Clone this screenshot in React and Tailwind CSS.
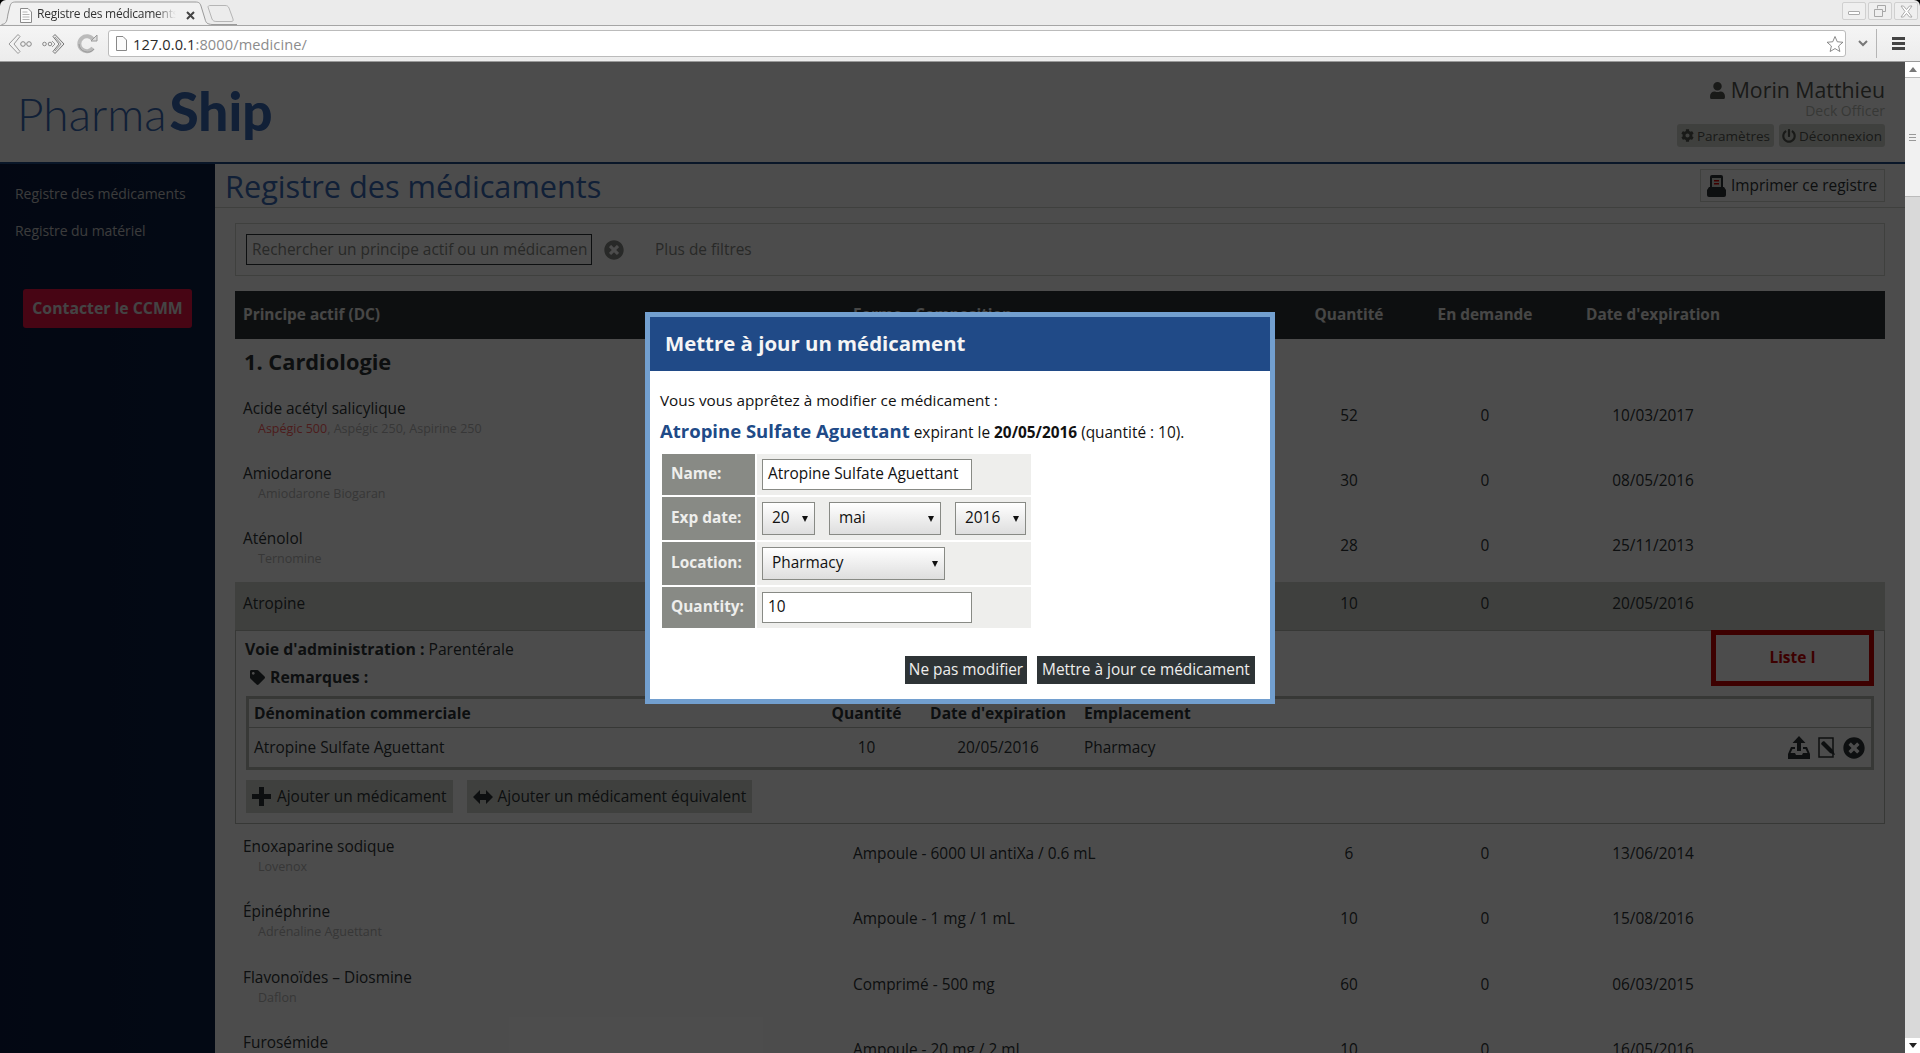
import React from "react";
import { FaCog, FaPowerOff, FaTag, FaTimesCircle, FaUser } from "react-icons/fa";

const F = { fontFamily: '"Open Sans","Noto Sans",sans-serif' };
const COLS = "grid grid-cols-[618px_437px_118px_154px_182px_1fr]";
const SUB = "grid grid-cols-[569px_97px_166px_1fr]";

function Row({ name, sub, red, forme, q, d, date, h = "h-[65px]" }) {
  return (
    <div className={`${COLS} ${h} text-[15.4px] leading-6 text-[#2e3436]`}>
      <div className="pl-[8px] pt-[10px]">
        <div>{name}</div>
        <div className="pl-[15px] text-[12.5px] leading-4 text-[#b8b8b8]">
          {red && <span className="text-[#ff6060]">{red}</span>}
          {red && ", "}
          {sub}
        </div>
      </div>
      <div className="pt-[17px]">{forme}</div>
      <div className="pt-[17px] text-center">{q}</div>
      <div className="pt-[17px] text-center">{d}</div>
      <div className="pt-[17px] text-center">{date}</div>
    </div>
  );
}

function Tab() {
  return (
    <div className="relative w-[236px] h-[25px] shrink-0 text-[#333]">
      <svg className="absolute left-0 top-0" width="236" height="25" viewBox="0 0 236 25">
        <path d="M0.5 24.5 C6 24 6 20 7 14 L9 6 C10 3 11 2 15 2 L194 2 C198 2 199 3 200 6 L204 19 C205 23 206 24 211 24.5 L236 24.5" fill="#f1f1f1" stroke="#9a9a9a" />
        <path d="M207 7 C207 6 208 5.5 209 5.5 L224 5.5 C226 5.5 227 6 228 8 L232 19 C232.5 21 232 21.5 230 21.5 L216 21.5 C213 21.5 212 21 211 19 Z" fill="#ececec" stroke="#b5b5b5" />
      </svg>
      <svg className="absolute left-[18px] top-[7px]" width="14" height="17" viewBox="0 0 14 17">
        <path d="M1.5 1.5h7.5l3.500 3.500v10.500h-11z" fill="#fbfbfb" stroke="#8a8a8a" />
        <path d="M3.500 5h5M3.500 7.500h7M3.500 10h7M3.500 12.500h7" stroke="#b5b5b5" />
      </svg>
      <div className="absolute left-[36px] top-[5px] w-[139px] overflow-hidden whitespace-nowrap leading-[18px] text-[12px] tracking-[-.25px] [mask-image:linear-gradient(to_right,black_85%,transparent)]">Registre des médicaments</div>
      <svg className="absolute left-[185px] top-[11px]" width="9" height="9" viewBox="0 0 9 9">
        <path d="M1 1l7 7M8 1l-7 7" stroke="#444" strokeWidth="2" />
      </svg>
    </div>
  );
}

function WinBtn({ children }) {
  return (
    <div className="w-[24px] h-[18px] border border-[#d0d0d0] rounded-[2px] bg-[#efefef] flex items-center justify-center">{children}</div>
  );
}

function Chrome() {
  return (
    <div className="shrink-0 h-[62px] flex flex-col bg-black" style={F}>
      <div className="h-[25px] rounded-t-[6px] bg-[#ebebeb] flex pl-[1px] pt-0 justify-between">
        <Tab />
        <div className="flex items-start gap-[2px] pt-[2px] pr-[2px]">
          <WinBtn><div className="w-[12px] h-[4px] mt-[3px] rounded-[1px] border border-[#aaa] bg-white" /></WinBtn>
          <WinBtn>
            <svg width="12" height="12" viewBox="0 0 12 12"><path d="M3.500 3.500v-3h8v6h-3M.5 4.500h8v7h-8z" fill="none" stroke="#a8a8a8" /></svg>
          </WinBtn>
          <WinBtn>
            <svg width="13" height="13" viewBox="0 0 13 13"><path d="M1 1h2.500l3 3.500 3-3.500h2.500l-4 5.500 4 5.500h-2.500l-3-3.500-3 3.500h-2.500l4-5.500z" fill="#fff" stroke="#aaa" /></svg>
          </WinBtn>
        </div>
      </div>
      <div className="h-[37px] bg-linear-to-b from-[#f5f5f5] to-[#ececec] border-t border-[#a5a5a5] border-b-[1px] border-b-[#9a9a9a] flex items-center pl-[8px]">
        <svg width="24" height="22" viewBox="0 0 24 22" className="shrink-0">
          <path d="M10 1.500l-9 9.500 9 9.500 2-2-6-7.500 6-7.500z" fill="#f2f2f2" stroke="#999" />
          <circle cx="15" cy="11" r="2.300" fill="none" stroke="#888" />
          <circle cx="21" cy="11" r="2.300" fill="none" stroke="#888" />
        </svg>
        <svg width="24" height="22" viewBox="0 0 24 22" className="shrink-0 ml-[10px]">
          <circle cx="2.500" cy="11" r="1.800" fill="none" stroke="#888" />
          <circle cx="8" cy="11" r="1.800" fill="none" stroke="#888" />
          <path d="M13 1.500l9 9.500-9 9.500-2-2 6-7.500-6-7.500z" fill="#e6e6e6" stroke="#777" />
          <path d="M13 4l6 7-6 7M10 8l3 3-3 3" fill="none" stroke="#999" />
        </svg>
        <svg width="22" height="22" viewBox="0 0 22 22" className="shrink-0 ml-[10px]">
          <path d="M17 15a7.500 7.500 0 1 1 0-8.500" fill="none" stroke="#bbb" strokeWidth="4" />
          <path d="M15 8h6v-6z" fill="#ddd" stroke="#999" />
          <path d="M18 16a8.500 8.500 0 0 1-15-5" fill="none" stroke="#999" />
        </svg>
        <div className="ml-[10px] w-[1738px] h-[27px] bg-white border border-[#bbb] rounded-[3px] flex items-center pl-[7px] pr-[1px]">
          <svg width="11" height="15" viewBox="0 0 11 15" className="shrink-0">
            <path d="M.5.5h6.500l3.500 3.500v10.500h-10z" fill="#fbfbfb" stroke="#888" />
          </svg>
          <div className="ml-[6px] text-[14.6px] leading-5 tracking-[.1px] text-[#2a2a2a]">127.0.0.1<span className="text-[#8c8c8c]">:8000/medicine/</span></div>
          <svg width="18" height="18" viewBox="0 0 24 24" className="ml-auto">
            <path d="M12 2l3 7 7.500.7-5.700 5 1.700 7.300-6.500-3.900-6.500 3.900 1.700-7.300-5.700-5 7.500-.7z" fill="#fff" stroke="#666" />
          </svg>
        </div>
        <svg width="10" height="7" viewBox="0 0 10 7" className="ml-[12px]"><path d="M1 1l4 4 4-4" fill="none" stroke="#777" strokeWidth="2" /></svg>
        <div className="ml-[8px] w-px h-[29px] bg-[#b5b5b5]" />
        <div className="ml-[15px] flex flex-col gap-[2px]">
          <div className="w-[13px] h-[3px] bg-[#444]" />
          <div className="w-[13px] h-[3px] bg-[#444]" />
          <div className="w-[13px] h-[3px] bg-[#444]" />
        </div>
      </div>
    </div>
  );
}

function Scrollbar() {
  return (
    <div className="w-[15px] shrink-0 bg-[#d9d9d9] flex flex-col">
      <div className="h-[15px] bg-white flex items-center justify-center">
        <div className="w-0 h-0 border-x-[4px] border-x-transparent border-b-[5px] border-b-[#777]" />
      </div>
      <div className="h-[120px] bg-[#f1f1f1] border-y border-[#bbb] flex flex-col items-center justify-center gap-[2px]">
        <div className="w-[7px] h-px bg-[#999]" />
        <div className="w-[7px] h-px bg-[#999]" />
        <div className="w-[7px] h-px bg-[#999]" />
      </div>
      <div className="flex-1" />
      <div className="h-[15px] bg-white flex items-center justify-center">
        <div className="w-0 h-0 border-x-[4px] border-x-transparent border-t-[5px] border-t-[#222]" />
      </div>
    </div>
  );
}

function PageBody() {
  return (
    <div className="absolute inset-0 bg-white flex flex-col">
      <header className="h-[102px] shrink-0 border-b-2 border-[#204a87] flex justify-between pr-[20px] pl-[17px] bg-white">
        <div className="pt-[18px] leading-[62px] whitespace-nowrap text-[#3a6bb8]" style={{ fontFamily: 'Lato,sans-serif' }}>
          <span className="font-light text-[46px]">Pharma</span><span className="font-black text-[53px] ml-[3px]">Ship</span>
        </div>
        <div className="flex flex-col items-end pt-[14px]">
          <div className="flex items-center gap-[5px] text-[21.3px] leading-7 text-[#555753]">
            <FaUser className="text-[17px]" />
            Morin Matthieu
          </div>
          <div className="text-[14px] leading-5 mt-[-3px] text-[#babdb6]">Deck Officer</div>
          <div className="flex gap-[5px] mt-[3px] text-[13.5px] leading-[22px] text-[#555753]">
            <div className="h-[23px] px-[4px] bg-[#d3d7cf] rounded-[3px] flex items-center gap-[3px]"><FaCog className="text-[13px]" />Paramètres</div>
            <div className="h-[23px] px-[3px] bg-[#d3d7cf] rounded-[3px] flex items-center gap-[3px]"><FaPowerOff className="text-[14px]" />Déconnexion</div>
          </div>
        </div>
      </header>
      <div className="flex flex-1 min-h-0">
        <aside className="w-[215px] shrink-0 bg-linear-to-r from-[#0a1a40] to-[#0c2044] pt-[20px]">
          <div className="pl-[15px] text-[14px] tracking-[-.05px] leading-5 text-[#c8c8c8]">Registre des médicaments</div>
          <div className="pl-[15px] mt-[17px] text-[14px] tracking-[-.05px] leading-5 text-[#c8c8c8]">Registre du matériel</div>
          <div className="ml-[23px] mt-[48px] w-[169px] h-[39px] rounded-[3px] bg-[#ee1144] flex items-center justify-center pt-[1px] text-[15.8px] font-bold text-[#e4e4e4]">Contacter le CCMM</div>
        </aside>
        <main className="flex-1 min-w-0">
          <div className="h-[44px] border-b border-[#d3d7cf] flex justify-between pl-[10px] pr-[20px] pt-[5px] mb-[15px]">
            <div className="text-[30.7px] leading-[34px] text-[#3a6bb8]">Registre des médicaments</div>
            <div className="h-[33px] w-[185px] border border-[#d3d7cf] flex items-center pl-[6px] gap-[5px] text-[15.4px] text-[#2e3436]">
              <svg width="19" height="22" viewBox="0 0 19 22" className="shrink-0">
                <path d="M3 2a2 2 0 0 1 2-2h9a2 2 0 0 1 2 2v11H3z" fill="#2e3436" />
                <path d="M5 3h9v9H5z" fill="#d3d7cf" />
                <path d="M7 5h5v1.500H7zM7 8h5v1.500H7z" fill="#cc0000" />
                <path d="M2 12h15l2 3v5a2 2 0 0 1-2 2H2a2 2 0 0 1-2-2v-5z" fill="#2e3436" />
              </svg>
              Imprimer ce registre
            </div>
          </div>
          <div className="ml-[20px] mr-[20px] h-[53px] border border-[#d3d7cf] flex items-center pl-[10px] mb-[15px]">
            <div className="w-[346px] h-[31px] border border-[#2e3436] pl-[5px] flex items-center text-[15.4px] text-[#888a85] overflow-hidden whitespace-nowrap">Rechercher un principe actif ou un médicamen</div>
            <FaTimesCircle className="ml-[12px] text-[20px] text-[#888a85]" />
            <div className="ml-[31px] text-[15.4px] text-[#888a85]">Plus de filtres</div>
          </div>
          <div className="mx-[20px]">
            <div className={`${COLS} h-[48px] items-center pb-[1px] bg-[#2e3436] text-[15.4px] font-bold text-[#eeeeec]`}>
              <div className="pl-[8px]">Principe actif (DC)</div>
              <div>Forme - Composition</div>
              <div className="text-center">Quantité</div>
              <div className="text-center">En demande</div>
              <div className="text-center">Date d'expiration</div>
            </div>
            <div className="h-[48px] flex items-center pl-[9px] pb-[2px] text-[21.8px] font-bold text-[#2e3436]">1. Cardiologie</div>
            <Row name="Acide acétyl salicylique" red="Aspégic 500" sub="Aspégic 250, Aspirine 250" forme="Comprimé - 500 mg" q="52" d="0" date="10/03/2017" />
            <Row name="Amiodarone" sub="Amiodarone Biogaran" forme="Comprimé - 200 mg" q="30" d="0" date="08/05/2016" />
            <Row name="Aténolol" sub="Ternomine" forme="Comprimé - 50 mg" q="28" d="0" date="25/11/2013" />
            <div className={`${COLS} h-[48px] pt-[10px] bg-[#d3d7cf] text-[15.4px] leading-6 text-[#2e3436]`}>
              <div className="pl-[8px]">Atropine</div>
              <div>Ampoule - 0.5 mg / 1 mL</div>
              <div className="text-center">10</div>
              <div className="text-center">0</div>
              <div className="text-center">20/05/2016</div>
            </div>
            <div className="h-[194px] border border-[#babdb6] px-[10px] text-[15.4px] leading-6 text-[#2e3436] mb-[1px]">
              <div className="h-[65px] flex justify-between">
                <div className="pt-[6px]">
                  <div className="ml-[-1px]"><b className="font-bold text-[15.8px]">Voie d'administration :</b> <span className="text-[15.7px]">Parentérale</span></div>
                  <div className="flex items-center pl-[4px] mt-[3px] gap-[5px]"><FaTag className="text-[15px]" /><b className="font-bold text-[15.8px]">Remarques :</b></div>
                </div>
                <div className="w-[163px] h-[56px] -mt-px pb-[2px] border-[5px] border-[#cc0000] flex items-center justify-center font-bold text-[#cc0000] text-[15.5px]">Liste I</div>
              </div>
              <div className="border-[3px] border-[#babdb6] h-[74px]">
                <div className={`${SUB} h-[29px] items-center border-b border-[#babdb6] font-bold text-[15.6px]`}>
                  <div className="pl-[5px]">Dénomination commerciale</div>
                  <div className="text-center">Quantité</div>
                  <div className="text-center">Date d'expiration</div>
                  <div className="pl-[3px]">Emplacement</div>
                </div>
                <div className={`${SUB} h-[39px] items-center`}>
                  <div className="pl-[5px]">Atropine Sulfate Aguettant</div>
                  <div className="text-center">10</div>
                  <div className="text-center">20/05/2016</div>
                  <div className="pl-[3px] flex items-center justify-between pr-[6px]">
                    Pharmacy
                    <div className="flex items-center gap-[8px]">
                      <svg width="22" height="23" viewBox="0 0 22 23">
                        <path d="M11 0l6.500 7H13v8H9V7H4.500z" fill="#2e3436" />
                        <path d="M3 11h4v2H4.500L2.500 17H7l1 2h6l1-2h4.500L17.500 13H15v-2h4l3 7v5H0v-5z" fill="#2e3436" />
                      </svg>
                      <svg width="17" height="21" viewBox="0 0 17 21">
                        <path d="M1 1h14v19H1z" fill="none" stroke="#2e3436" strokeWidth="1.500" />
                        <path d="M3 4l2-1 9 9 2 5-5-2-9-9z" fill="#2e3436" transform="translate(1 1)" />
                      </svg>
                      <FaTimesCircle className="text-[22px] text-[#2e3436]" />
                    </div>
                  </div>
                </div>
              </div>
              <div className="flex gap-[14px] mt-[10px]">
                <div className="h-[33px] px-[6px] bg-[#d3d7cf] flex items-center gap-[6px] whitespace-nowrap">
                  <svg width="19" height="19" viewBox="0 0 19 19" className="shrink-0"><path d="M7 0h5v7h7v5h-7v7H7v-7H0V7h7z" fill="#2e3436" /></svg>
                  Ajouter un médicament
                </div>
                <div className="h-[33px] px-[6px] bg-[#d3d7cf] flex items-center gap-[5px] whitespace-nowrap">
                  <svg width="20" height="14" viewBox="0 0 20 14" className="shrink-0"><path d="M0 7l7-7v4h6V0l7 7-7 7v-4H7v4z" fill="#2e3436" /></svg>
                  Ajouter un médicament équivalent
                </div>
              </div>
            </div>
            <Row h="h-[65.4px]" name="Enoxaparine sodique" sub="Lovenox" forme="Ampoule - 6000 UI antiXa / 0.6 mL" q="6" d="0" date="13/06/2014" />
            <Row h="h-[65.4px]" name="Épinéphrine" sub="Adrénaline Aguettant" forme="Ampoule - 1 mg / 1 mL" q="10" d="0" date="15/08/2016" />
            <Row h="h-[65.4px]" name="Flavonoïdes – Diosmine" sub="Daflon" forme="Comprimé - 500 mg" q="60" d="0" date="06/03/2015" />
            <Row h="h-[65.4px]" name="Furosémide" sub="Lasilix" forme="Ampoule - 20 mg / 2 mL" q="10" d="0" date="16/05/2016" />
          </div>
        </main>
      </div>
    </div>
  );
}

function Sel({ w, children }) {
  return (
    <div className={`relative ${w} h-[33px] border border-[#888a85] bg-linear-to-b from-white to-[#dedede] pl-[9px] pb-[1px] flex items-center text-[15.4px] text-[#111]`}>
      {children}
      <div className="absolute right-[6px] top-[13px] w-0 h-0 border-x-[3px] border-x-transparent border-t-[6px] border-t-[#111]" />
    </div>
  );
}

function FormRow({ label, h, children }) {
  return (
    <div className={`flex gap-[2px] ${h}`}>
      <div className="w-[93px] bg-[#888a85] flex items-center pl-[9px] pb-[1px] text-[15.4px] font-bold text-[#eeeeec]">{label}</div>
      <div className="w-[274px] bg-[#eeeeec] flex items-center gap-[14px] pl-[5px]">{children}</div>
    </div>
  );
}

function Modal() {
  return (
    <div className="absolute left-[645px] top-[250px] w-[630px] h-[392px] border-[5px] border-[#729fcf] bg-white flex flex-col text-[#111]">
      <div className="h-[54px] shrink-0 bg-[#204a87] flex items-center pl-[15px] pb-[2px] text-[20.4px] font-bold text-[#f5f5f5]">Mettre à jour un médicament</div>
      <div className="px-[10px] pt-[17px] flex-1 flex flex-col">
        <div className="text-[15.3px] leading-[24px]">Vous vous apprêtez à modifier ce médicament :</div>
        <div className="mt-[7px] text-[15.4px] leading-[24px] whitespace-nowrap"><b className="text-[18.5px] font-bold text-[#204a87]">Atropine Sulfate Aguettant</b> expirant le <b>20/05/2016</b> (quantité : 10).</div>
        <div className="mt-[9px] ml-[2px] flex flex-col gap-[2px]">
          <FormRow label="Name:" h="h-[41px]">
            <div className="w-[210px] h-[31px] border border-[#888a85] bg-white pl-[5px] pb-[1px] flex items-center text-[15.4px] whitespace-nowrap">Atropine Sulfate Aguettant</div>
          </FormRow>
          <FormRow label="Exp date:" h="h-[43px]">
            <Sel w="w-[53px]">20</Sel>
            <Sel w="w-[112px]">mai</Sel>
            <Sel w="w-[71px]">2016</Sel>
          </FormRow>
          <FormRow label="Location:" h="h-[43px]">
            <Sel w="w-[183px]">Pharmacy</Sel>
          </FormRow>
          <FormRow label="Quantity:" h="h-[41px]">
            <div className="w-[210px] h-[31px] border border-[#888a85] bg-white pl-[5px] pb-[1px] flex items-center text-[15.4px]">10</div>
          </FormRow>
        </div>
        <div className="mt-[28px] flex justify-end gap-[10px] pr-[5px] text-[15.4px] text-[#eeeeec]">
          <div className="h-[28px] w-[122px] bg-[#2e3436] flex items-center justify-center whitespace-nowrap">Ne pas modifier</div>
          <div className="h-[28px] w-[218px] bg-[#2e3436] flex items-center justify-center whitespace-nowrap">Mettre à jour ce médicament</div>
        </div>
      </div>
    </div>
  );
}

export default function App() {
  return (
    <div className="w-[1920px] h-[1053px] overflow-hidden flex flex-col bg-black" style={F}>
      <Chrome />
      <div className="flex flex-1 min-h-0">
        <div className="relative flex-1 overflow-hidden">
          <PageBody />
          <div className="absolute inset-0 bg-black/70" />
          <Modal />
        </div>
        <Scrollbar />
      </div>
    </div>
  );
}
